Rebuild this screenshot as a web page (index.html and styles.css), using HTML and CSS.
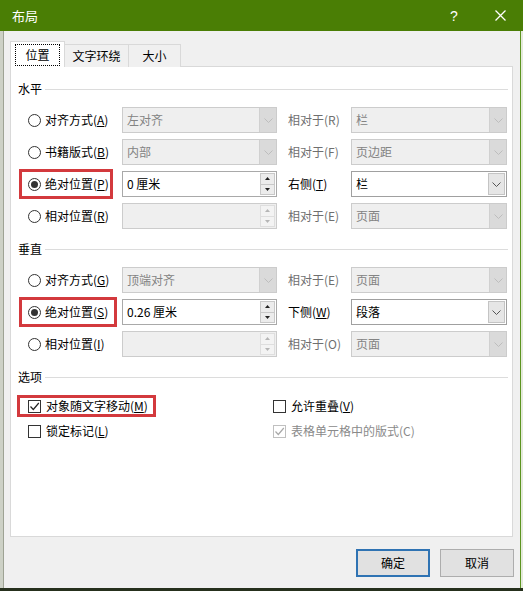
FILE: index.html
```html
<!DOCTYPE html>
<html lang="zh-CN">
<head>
<meta charset="utf-8">
<title>布局</title>
<link rel="stylesheet" href="styles.css">
</head>
<body>
<div class="window">
  <div class="titlebar">
    <span class="title">布局</span>
    <span class="tb-btn">?</span>
    <span class="tb-btn"><svg width="11" height="11" viewBox="0 0 11 11"><path d="M0.5 0.5L10.5 10.5M10.5 0.5L0.5 10.5" stroke="#fff" stroke-width="1.3" fill="none"/></svg></span>
  </div>
  <div class="client">
    <div class="tabs">
      <div class="tab active"><span class="focus">位置</span></div>
      <div class="tab">文字环绕</div>
      <div class="tab">大小</div>
    </div>
    <div class="panel">
      <div class="group-h"><span>水平</span><i></i></div>
      <div class="grid">
        <div class="cell"><label class="opt"><span class="radio"></span><span>对齐方式(<u>A</u>)</span></label></div>
        <div class="sel dis"><span class="val">左对齐</span><span class="dd"><svg width="9" height="5" viewBox="0 0 9 5"><polyline points="0.5,0.5 4.5,4.5 8.5,0.5" fill="none" stroke="currentColor"/></svg></span></div>
        <div class="lbl dis">相对于(R)</div>
        <div class="sel dis"><span class="val">栏</span><span class="dd"><svg width="9" height="5" viewBox="0 0 9 5"><polyline points="0.5,0.5 4.5,4.5 8.5,0.5" fill="none" stroke="currentColor"/></svg></span></div>

        <div class="cell"><label class="opt"><span class="radio"></span><span>书籍版式(<u>B</u>)</span></label></div>
        <div class="sel dis"><span class="val">内部</span><span class="dd"><svg width="9" height="5" viewBox="0 0 9 5"><polyline points="0.5,0.5 4.5,4.5 8.5,0.5" fill="none" stroke="currentColor"/></svg></span></div>
        <div class="lbl dis">相对于(F)</div>
        <div class="sel dis"><span class="val">页边距</span><span class="dd"><svg width="9" height="5" viewBox="0 0 9 5"><polyline points="0.5,0.5 4.5,4.5 8.5,0.5" fill="none" stroke="currentColor"/></svg></span></div>

        <div class="cell"><label class="opt hl hl-p"><span class="radio on"></span><span>绝对位置(<u>P</u>)</span></label></div>
        <div class="sel inp"><span class="val">0 厘米</span><span class="spin"><span class="sp"><svg width="5" height="3" viewBox="0 0 5 3"><polygon points="2.5,0 5,3 0,3"/></svg></span><span class="sp"><svg width="5" height="3" viewBox="0 0 5 3"><polygon points="0,0 5,0 2.5,3"/></svg></span></span></div>
        <div class="lbl">右侧(<u>T</u>)</div>
        <div class="sel en"><span class="val">栏</span><span class="dd"><svg width="9" height="5" viewBox="0 0 9 5"><polyline points="0.5,0.5 4.5,4.5 8.5,0.5" fill="none" stroke="currentColor"/></svg></span></div>

        <div class="cell"><label class="opt"><span class="radio"></span><span>相对位置(<u>R</u>)</span></label></div>
        <div class="sel inp dis"><span class="val"></span><span class="spin"><span class="sp"><svg width="5" height="3" viewBox="0 0 5 3"><polygon points="2.5,0 5,3 0,3"/></svg></span><span class="sp"><svg width="5" height="3" viewBox="0 0 5 3"><polygon points="0,0 5,0 2.5,3"/></svg></span></span></div>
        <div class="lbl dis">相对于(E)</div>
        <div class="sel dis"><span class="val">页面</span><span class="dd"><svg width="9" height="5" viewBox="0 0 9 5"><polyline points="0.5,0.5 4.5,4.5 8.5,0.5" fill="none" stroke="currentColor"/></svg></span></div>
      </div>

      <div class="group-h next"><span>垂直</span><i></i></div>
      <div class="grid">
        <div class="cell"><label class="opt"><span class="radio"></span><span>对齐方式(<u>G</u>)</span></label></div>
        <div class="sel dis"><span class="val">顶端对齐</span><span class="dd"><svg width="9" height="5" viewBox="0 0 9 5"><polyline points="0.5,0.5 4.5,4.5 8.5,0.5" fill="none" stroke="currentColor"/></svg></span></div>
        <div class="lbl dis">相对于(E)</div>
        <div class="sel dis"><span class="val">页面</span><span class="dd"><svg width="9" height="5" viewBox="0 0 9 5"><polyline points="0.5,0.5 4.5,4.5 8.5,0.5" fill="none" stroke="currentColor"/></svg></span></div>

        <div class="cell"><label class="opt hl hl-s"><span class="radio on"></span><span>绝对位置(<u>S</u>)</span></label></div>
        <div class="sel inp"><span class="val">0.26 厘米</span><span class="spin"><span class="sp"><svg width="5" height="3" viewBox="0 0 5 3"><polygon points="2.5,0 5,3 0,3"/></svg></span><span class="sp"><svg width="5" height="3" viewBox="0 0 5 3"><polygon points="0,0 5,0 2.5,3"/></svg></span></span></div>
        <div class="lbl">下侧(<u>W</u>)</div>
        <div class="sel en"><span class="val">段落</span><span class="dd"><svg width="9" height="5" viewBox="0 0 9 5"><polyline points="0.5,0.5 4.5,4.5 8.5,0.5" fill="none" stroke="currentColor"/></svg></span></div>

        <div class="cell"><label class="opt"><span class="radio"></span><span>相对位置(<u>I</u>)</span></label></div>
        <div class="sel inp dis"><span class="val"></span><span class="spin"><span class="sp"><svg width="5" height="3" viewBox="0 0 5 3"><polygon points="2.5,0 5,3 0,3"/></svg></span><span class="sp"><svg width="5" height="3" viewBox="0 0 5 3"><polygon points="0,0 5,0 2.5,3"/></svg></span></span></div>
        <div class="lbl dis">相对于(O)</div>
        <div class="sel dis"><span class="val">页面</span><span class="dd"><svg width="9" height="5" viewBox="0 0 9 5"><polyline points="0.5,0.5 4.5,4.5 8.5,0.5" fill="none" stroke="currentColor"/></svg></span></div>
      </div>

      <div class="group-h next"><span>选项</span><i></i></div>
      <div class="checks">
        <label class="chk hl-m"><span class="box"><svg width="11" height="11" viewBox="0 0 11 11"><polyline points="1.5,5.5 4.3,8.5 9.8,2" fill="none" stroke="#222" stroke-width="1.2"/></svg></span><span>对象随文字移动(<u>M</u>)</span></label>
        <label class="chk col2"><span class="box"></span><span>允许重叠(<u>V</u>)</span></label>
        <label class="chk"><span class="box"></span><span>锁定标记(<u>L</u>)</span></label>
        <label class="chk col2 dis"><span class="box"><svg width="11" height="11" viewBox="0 0 11 11"><polyline points="1.5,5.5 4.3,8.5 9.8,2" fill="none" stroke="#a8a8a8" stroke-width="1.2"/></svg></span><span>表格单元格中的版式(C)</span></label>
      </div>
    </div>
    <div class="footer">
      <span class="btn default">确定</span>
      <span class="btn">取消</span>
    </div>
  </div>
</div>
</body>
</html>
```

FILE: styles.css
```css
* { box-sizing: border-box; }
html, body { margin: 0; padding: 0; }
body {
  width: 523px;
  height: 591px;
  overflow: hidden;
  background: #26301d;
  font-family: "Noto Sans CJK SC", "Microsoft YaHei", sans-serif;
  font-size: 12px;
  line-height: 14px;
  color: #000;
}
u { text-decoration: underline; text-underline-offset: 1px; }

.window {
  width: 523px;
  height: 588px;
  display: flex;
  flex-direction: column;
  background: #f0f0f0;
}

.titlebar {
  flex: none;
  height: 31px;
  background: #4a7e05;
  color: #fff;
  display: flex;
  align-items: center;
  padding-left: 12px;
}
.title { flex: 1; font-size: 13px; }
.tb-btn {
  width: 46px;
  height: 31px;
  display: flex;
  align-items: center;
  justify-content: center;
  font-family: "Liberation Sans", sans-serif;
  font-size: 14px;
}

.client {
  flex: 1;
  padding: 10px 10px 0 10px;
  box-shadow: inset 3px 0 #cdd1c6, inset 4px 0 #9ea394, inset -2px 0 #e4eadb, inset -3px 0 #5c9420;
}

.tabs { display: flex; align-items: flex-end; height: 26px; position: relative; z-index: 1; }
.tab {
  height: 23px;
  border: 1px solid #d9d9d9;
  border-bottom: none;
  background: #f0f0f0;
  margin-left: -1px;
  display: flex;
  align-items: center;
  justify-content: center;
}
.tab:nth-child(2) { width: 65px; }
.tab:nth-child(3) { width: 53px; }
.tab.active {
  width: 55px;
  height: 26px;
  margin-left: 0;
  background: #fff;
  padding: 2px 4px 1px;
  align-items: stretch;
}
.focus {
  flex: 1;
  border: 1px dotted #000;
  display: flex;
  align-items: center;
  justify-content: center;
}

.panel {
  margin-top: -1px;
  height: 471px;
  background: #fff;
  border: 1px solid #d9d9d9;
  padding: 15px 4px 0 7px;
}

.group-h { display: flex; align-items: center; height: 14px; gap: 3px; margin-bottom: 11px; }
.group-h i { flex: 1; height: 1px; background: #dcdcdc; }
.group-h.next { margin-top: 13px; }

.grid {
  display: grid;
  grid-template-columns: 104px 155px 74px 156px;
  grid-auto-rows: 26px;
  row-gap: 6px;
}
.cell { display: flex; align-items: stretch; }
.opt {
  display: inline-flex;
  align-items: center;
  gap: 4px;
  margin-left: 3px;
  padding-left: 7px;
  height: 26px;
}
.hl { outline: 3px solid #d3393d; outline-offset: -1px; }
.hl-p { width: 90px; }
.hl-s { width: 94px; outline-offset: -1px; }
.hl-s { box-shadow: 0 0 0 0 transparent; }

.radio {
  width: 13px;
  height: 13px;
  border: 1px solid #333;
  border-radius: 50%;
  background: #fff;
  display: flex;
  align-items: center;
  justify-content: center;
  flex: none;
}
.radio.on::after {
  content: "";
  width: 7px;
  height: 7px;
  border-radius: 50%;
  background: #333;
}

.sel {
  display: flex;
  align-items: stretch;
  height: 26px;
  border: 1px solid #a9a9a9;
  background: #fff;
}
.sel .val { flex: 1; padding-left: 4px; display: flex; align-items: center; }
.sel .dd {
  width: 17px;
  display: flex;
  align-items: center;
  justify-content: center;
  color: #555;
  background: #e5e5e5;
  border-left: 1px solid #cfcfcf;
}
.sel.dis { background: #efefef; border-color: #cccccc; color: #838383; }
.sel.dis .dd { background: #dadada; border-left-color: #d0d0d0; color: #bdbdbd; }
.sel.en { border-color: #a0a0a0; }
.sel.en .dd { background: #e6e6e6; border: 1px solid #c4c4c4; margin: 1px; }

.sel.inp.dis { background: #efefef; }
.spin {
  width: 16px;
  display: flex;
  flex-direction: column;
  padding: 1px 1px 1px 0;
  gap: 0;
}
.sp {
  flex: 1;
  display: flex;
  align-items: center;
  justify-content: center;
  background: #ececec;
  border: 1px solid #c8c8c8;
  fill: #222;
}
.sp + .sp { border-top: none; }
.dis .sp { background: #f3f3f3; border-color: #dedede; fill: #b5b5b5; }

.lbl { display: flex; align-items: center; padding-left: 11px; }
.lbl.dis { color: #6f6f6f; }

.checks {
  display: grid;
  grid-template-columns: 255px 1fr;
  grid-auto-rows: 22px;
  row-gap: 3px;
}
.chk {
  display: inline-flex;
  align-items: center;
  gap: 5px;
  padding-left: 10px;
  justify-self: start;
}
.chk.col2 { padding-left: 0; }
.chk.dis { color: #8a8a8a; }
.hl-m {
  margin-left: -1px;
  padding-left: 11px;
  width: 139px;
  outline: 3px solid #d3393d;
  outline-offset: -3px;
}
.box {
  width: 13px;
  height: 13px;
  border: 1px solid #333;
  background: #fff;
  flex: none;
  display: flex;
  align-items: center;
  justify-content: center;
}
.chk.dis .box { border-color: #c0c0c0; }

.footer {
  display: flex;
  justify-content: flex-end;
  gap: 10px;
  padding-top: 12px;
  margin-right: -1px;
}
.btn {
  width: 74px;
  height: 28px;
  background: #e1e1e1;
  border: 1px solid #adadad;
  display: flex;
  align-items: center;
  justify-content: center;
}
.btn.default { border: 2px solid #2f73b3; }
```
